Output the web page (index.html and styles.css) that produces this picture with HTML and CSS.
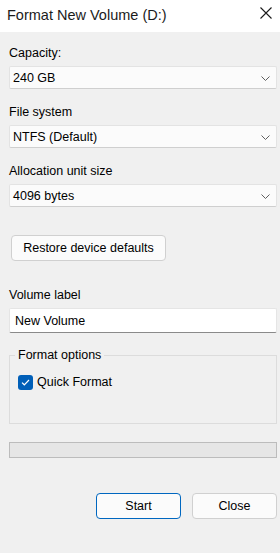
FILE: index.html
```html
<!DOCTYPE html>
<html lang="en">
<head>
  <meta charset="UTF-8">
  <title>Format New Volume (D:)</title>
  <link rel="stylesheet" href="styles.css">
</head>
<body>
  <div class="titlebar">
    <span class="title">Format New Volume (D:)</span>
    <svg class="close-icon" width="12" height="12" viewBox="0 0 12 12"><path d="M0.5 0.5 L11.5 11.5 M11.5 0.5 L0.5 11.5" stroke="#1a1a1a" stroke-width="1.1" fill="none"/></svg>
  </div>

  <main class="content">
    <div class="field">
      <label class="label">Capacity:</label>
      <div class="select"><span>240 GB</span><svg class="chevron" width="9" height="5" viewBox="0 0 9 5"><path d="M0.5 0.5 L4.5 4.5 L8.5 0.5" stroke="#5f5f5f" stroke-width="1" fill="none"/></svg></div>
    </div>
    <div class="field">
      <label class="label">File system</label>
      <div class="select"><span>NTFS (Default)</span><svg class="chevron" width="9" height="5" viewBox="0 0 9 5"><path d="M0.5 0.5 L4.5 4.5 L8.5 0.5" stroke="#5f5f5f" stroke-width="1" fill="none"/></svg></div>
    </div>
    <div class="field">
      <label class="label">Allocation unit size</label>
      <div class="select"><span>4096 bytes</span><svg class="chevron" width="9" height="5" viewBox="0 0 9 5"><path d="M0.5 0.5 L4.5 4.5 L8.5 0.5" stroke="#5f5f5f" stroke-width="1" fill="none"/></svg></div>
    </div>

    <button class="btn btn-restore">Restore device defaults</button>

    <div class="field field-volume">
      <label class="label">Volume label</label>
      <div class="textbox">New Volume</div>
    </div>

    <fieldset class="options">
      <legend>Format options</legend>
      <div class="check-row">
        <span class="checkbox"><svg width="9" height="7" viewBox="0 0 9 7"><path d="M1 3.6 L3.3 5.8 L8 1" stroke="#fff" stroke-width="1.2" fill="none"/></svg></span>
        <span>Quick Format</span>
      </div>
    </fieldset>

    <div class="progress"></div>

    <div class="actions">
      <button class="btn btn-primary">Start</button>
      <button class="btn">Close</button>
    </div>
  </main>
</body>
</html>
```

FILE: styles.css
```css
html,
body {
  margin: 0;
  padding: 0;
}
body {
  width: 280px;
  height: 553px;
  overflow: hidden;
  background: #f0f0f0;
  color: #000;
  font-family: "Liberation Sans", Arial, sans-serif;
  font-size: 12.5px;
  line-height: 16px;
}

.titlebar {
  height: 32px;
  background: #fff;
  display: flex;
  align-items: center;
  justify-content: space-between;
  padding: 0 7px 0 7px;
}
.title {
  font-size: 14.5px;
  color: #1b1b1b;
  margin-top: -3px;
}
.close-icon {
  margin-top: -6px;
  margin-right: 1px;
}

.content {
  display: flex;
  flex-direction: column;
  padding: 13px 3px 0 9px;
}

.field {
  display: flex;
  flex-direction: column;
  gap: 5px;
}
.field + .field {
  margin-top: 15px;
}
.label {
  display: block;
}

.select {
  height: 23px;
  box-sizing: border-box;
  display: flex;
  align-items: center;
  justify-content: space-between;
  padding: 0 6px 0 3px;
  background: #fbfbfb;
  border: 1px solid #e3e3e3;
  border-bottom-color: #cfcfcf;
  border-radius: 2px;
}
.chevron {
  margin-top: 1px;
}

.btn {
  font: inherit;
  color: #000;
  height: 26px;
  box-sizing: border-box;
  background: #fbfbfb;
  border: 1px solid #d0d0d0;
  border-radius: 4px;
  padding: 0;
}
.btn-restore {
  align-self: flex-start;
  margin: 28px 0 0 2px;
  width: 155px;
}

.field-volume {
  margin-top: 26px;
}
.textbox {
  height: 25px;
  box-sizing: border-box;
  display: flex;
  align-items: center;
  padding: 0 5px;
  background: #fff;
  border: 1px solid #e5e5e5;
  border-bottom-color: #8a8a8a;
  border-radius: 2px;
}

.options {
  margin: 14px 0 0;
  padding: 0 8px 0;
  height: 77px;
  box-sizing: border-box;
  border: 1px solid #dcdcdc;
  border-radius: 0;
}
.options legend {
  padding: 0 3px;
  margin-left: -3px;
}
.check-row {
  display: flex;
  align-items: center;
  gap: 4px;
  margin-top: 11px;
}
.checkbox {
  width: 15px;
  height: 15px;
  border-radius: 3px;
  background: #005fb8;
  display: flex;
  align-items: center;
  justify-content: center;
}

.progress {
  margin-top: 18px;
  height: 16px;
  box-sizing: border-box;
  background: #e6e6e6;
  border: 1px solid #bcbcbc;
}

.actions {
  display: flex;
  justify-content: flex-end;
  gap: 11px;
  margin-top: 35px;
}
.actions .btn {
  width: 85px;
}
.btn-primary {
  border-color: #0067c0;
}
```
